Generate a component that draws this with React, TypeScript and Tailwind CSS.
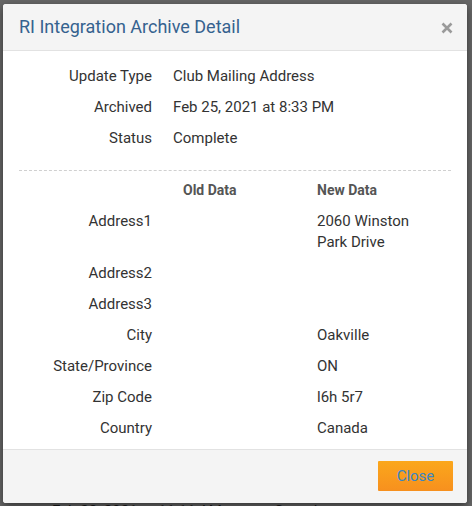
import React from "react";

const top = [
  ["Update Type", "Club Mailing Address"],
  ["Archived", "Feb 25, 2021 at 8:33 PM"],
  ["Status", "Complete"],
];

const data: [string, string, string][] = [
  ["Address1", "", "2060 Winston Park Drive"],
  ["Address2", "", ""],
  ["Address3", "", ""],
  ["City", "", "Oakville"],
  ["State/Province", "", "ON"],
  ["Zip Code", "", "l6h 5r7"],
  ["Country", "", "Canada"],
];

export default function App() {
  return (
    <div
      className="relative w-[472px] h-[506px] overflow-hidden bg-[#676767]"
      style={{ fontFamily: "Roboto, 'Liberation Sans', sans-serif" }}
    >
      <div className="absolute left-[52px] top-[500px] text-[15px] text-[#1a1a1a] flex gap-[52px]">
        <span>Feb 22, 2021 at 11:11 AM</span>
        <span>Complete</span>
      </div>
      <div className="absolute left-[3px] top-[4px] w-[464px] h-[499px] bg-white rounded-[3px] shadow-[0_3px_9px_rgba(0,0,0,0.5)] flex flex-col overflow-hidden">
        <div className="h-[47px] shrink-0 bg-[#f4f4f4] border-b border-[#e2e2e2] flex items-center justify-between pl-[16px] pr-[14px]">
          <h4 className="text-[18px] leading-none text-[#35628f] font-normal">
            RI Integration Archive Detail
          </h4>
          <svg width="12" height="12" viewBox="0 0 12 12" className="mt-[1px]">
            <path d="M1.5 1.5L10.5 10.5M10.5 1.5L1.5 10.5" stroke="#9a9a9a" strokeWidth="2.6" strokeLinecap="butt" />
          </svg>
        </div>
        <div className="flex-1 px-[16px] pt-[10px] text-[15px] leading-[21px] text-[#333]">
          <div className="grid grid-cols-[133px_1fr] gap-x-[21px]">
            {top.map(([l, v]) => (
              <React.Fragment key={l}>
                <div className="text-right py-[5px]">{l}</div>
                <div className="py-[5px]">{v}</div>
              </React.Fragment>
            ))}
          </div>
          <div className="border-t border-dashed border-[#d0d0d0] mt-[16px] mb-[4px]" />
          <div className="grid grid-cols-[133px_103px_118px] gap-x-[31px]">
            <div className="py-[5px]" />
            <div className="py-[5px] font-bold text-[14px] text-[#555]">Old Data</div>
            <div className="py-[5px] font-bold text-[14px] text-[#555]">New Data</div>
            {data.map(([l, o, n]) => (
              <React.Fragment key={l}>
                <div className="text-right py-[5px]">{l}</div>
                <div className="py-[5px]">{o}</div>
                <div className="py-[5px]">{n}</div>
              </React.Fragment>
            ))}
          </div>
        </div>
        <div className="h-[54px] shrink-0 bg-[#f4f4f4] border-t border-[#e2e2e2] flex items-start justify-end pt-[11px] pr-[14px]">
          <button className="w-[75px] h-[30px] bg-gradient-to-b from-[#fba71b] to-[#f7901e] text-[#3a86c4] text-[15px] rounded-[1px]">
            Close
          </button>
        </div>
      </div>
    </div>
  );
}
